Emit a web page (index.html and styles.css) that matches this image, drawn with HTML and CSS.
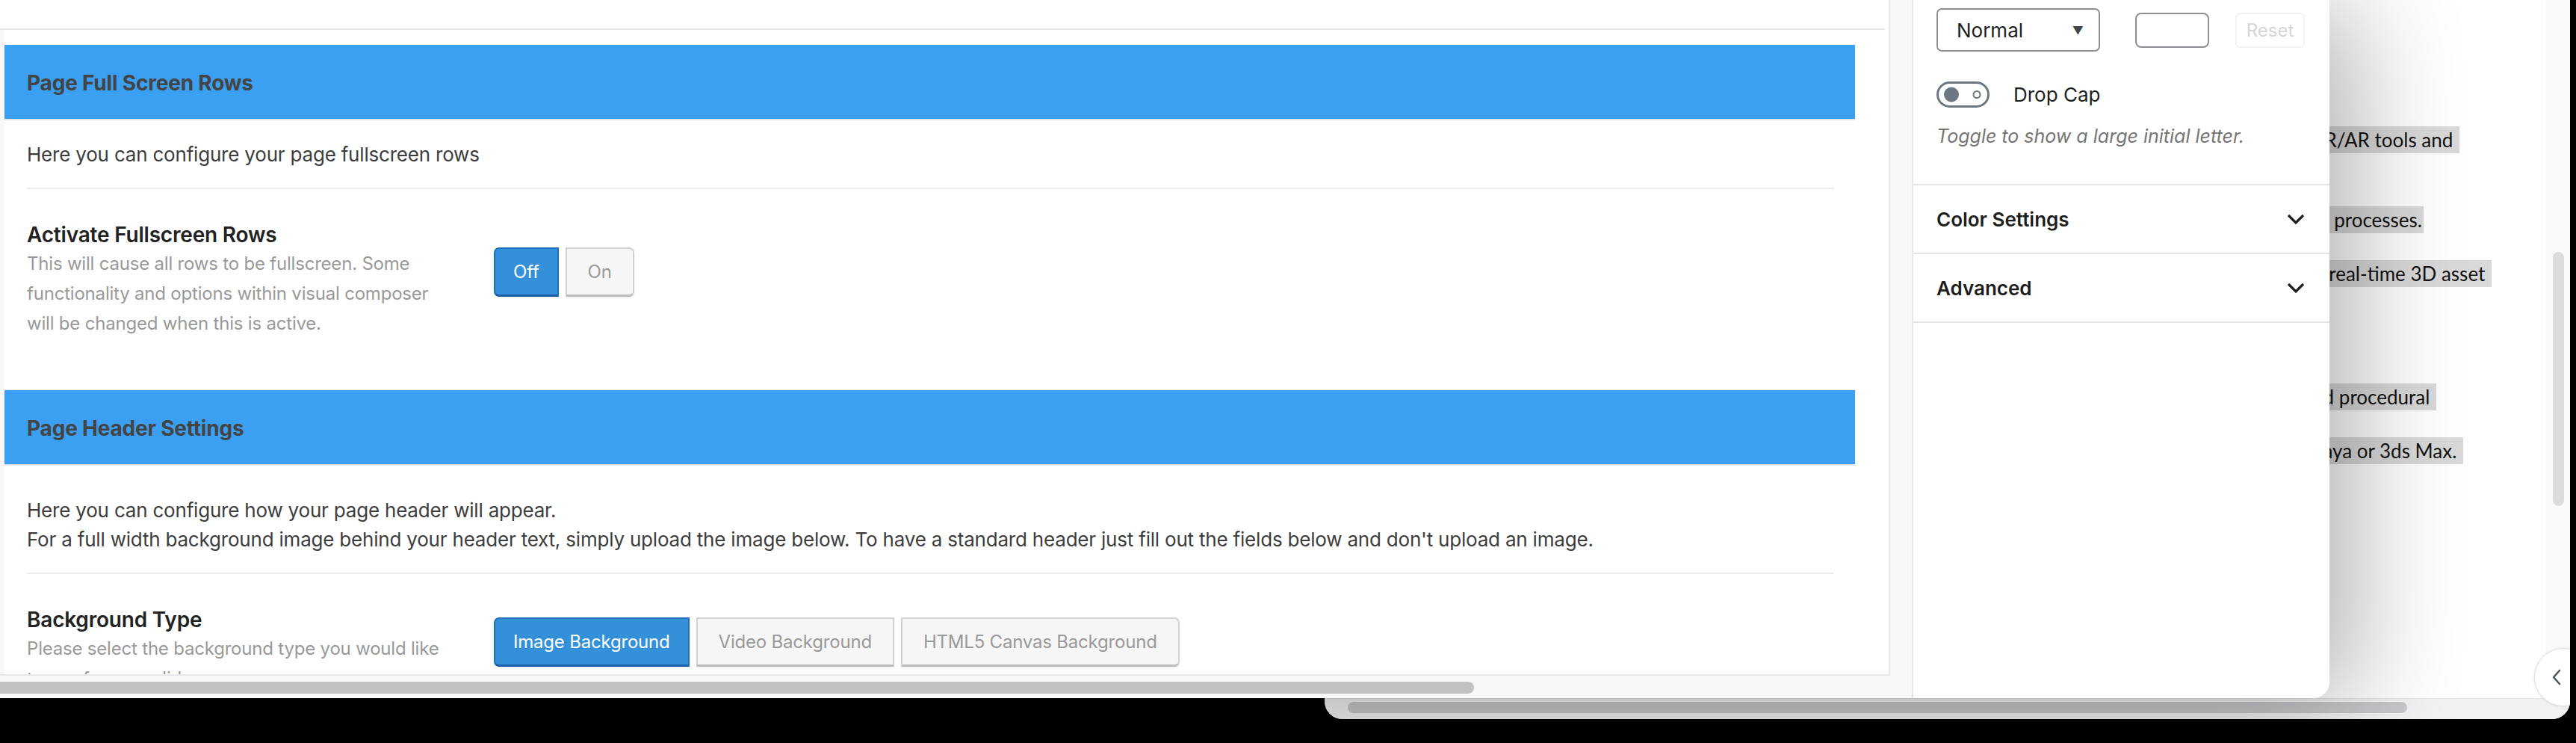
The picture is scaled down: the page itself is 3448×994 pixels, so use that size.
FILE: index.html
```html
<!DOCTYPE html>
<html lang="en">
<head>
<meta charset="utf-8">
<title>Page Settings</title>
<link rel="stylesheet" href="styles.css">
</head>
<body>
<div class="desktop">

  <div class="win-back">
    <div class="bk-main">
      <div class="bk-content">
        <div class="bk-line l1"><span class="hl">VR/AR tools and </span></div>
        <div class="bk-line l2"><span class="hl">and processes.</span></div>
        <div class="bk-line l3"><span class="hl">and real-time 3D asset </span></div>
        <div class="bk-line l4"><span class="hl">and procedural </span></div>
        <div class="bk-line l5"><span class="hl">Maya or 3ds Max. </span></div>
      </div>
      <div class="bk-vstrip"><div class="bk-vthumb"></div></div>
    </div>
    <div class="bk-hbar"><div class="bk-hthumb"></div></div>
    <div class="collapse-btn">
      <svg width="14" height="24" viewBox="0 0 14 24"><polyline points="11,3 3,12 11,21" fill="none" stroke="#50575e" stroke-width="2.6" stroke-linecap="round" stroke-linejoin="round"/></svg>
    </div>
  </div>

  <div class="win-front">
    <div class="left-col">
      <div class="metabox">
        <div class="mb-top"></div>
        <div class="mb-inner">
          <section class="sec">
            <h2 class="sec-head">Page Full Screen Rows</h2>
            <div class="sec-body">
              <p class="intro">Here you can configure your page fullscreen rows</p>
              <div class="opt">
                <div class="opt-label">
                  <h3 class="opt-title">Activate Fullscreen Rows</h3>
                  <p class="opt-desc">This will cause all rows to be fullscreen. Some functionality and options within visual composer will be changed when this is active.</p>
                </div>
                <div class="btn-group">
                  <span class="btn btn-active">Off</span>
                  <span class="btn">On</span>
                </div>
              </div>
            </div>
          </section>
          <section class="sec sec-second">
            <h2 class="sec-head">Page Header Settings</h2>
            <div class="sec-body">
              <p class="intro intro-tall">Here you can configure how your page header will appear.<br>For a full width background image behind your header text, simply upload the image below. To have a standard header just fill out the fields below and don't upload an image.</p>
              <div class="opt">
                <div class="opt-label">
                  <h3 class="opt-title">Background Type</h3>
                  <p class="opt-desc">Please select the background type you would like to use for your slide.</p>
                </div>
                <div class="btn-group">
                  <span class="btn btn-active">Image Background</span>
                  <span class="btn">Video Background</span>
                  <span class="btn">HTML5 Canvas Background</span>
                </div>
              </div>
            </div>
          </section>
        </div>
      </div>
      <div class="hscroll"><div class="hthumb"></div></div>
    </div>

    <aside class="sidebar">
      <div class="sb-block">
        <div class="size-row">
          <div class="select"><span>Normal</span><span class="caret">▼</span></div>
          <div class="num-input"></div>
          <div class="reset-btn">Reset</div>
        </div>
        <div class="toggle-row">
          <svg class="toggle" width="71" height="35" viewBox="0 0 71 35"><rect x="1.5" y="1.5" width="68" height="32" rx="16" fill="#fff" stroke="#6c7781" stroke-width="3"/><circle cx="20" cy="17.5" r="10" fill="#6c7781"/><circle cx="54" cy="17.5" r="4.5" fill="none" stroke="#6c7781" stroke-width="2"/></svg>
          <span class="toggle-label">Drop Cap</span>
        </div>
        <p class="help">Toggle to show a large initial letter.</p>
      </div>
      <div class="panel-row"><span>Color Settings</span><svg class="chev" width="24" height="14" viewBox="0 0 24 14"><polyline points="2,2 12,12 22,2" fill="none" stroke="#1e1e1e" stroke-width="3.2"/></svg></div>
      <div class="panel-row"><span>Advanced</span><svg class="chev" width="24" height="14" viewBox="0 0 24 14"><polyline points="2,2 12,12 22,2" fill="none" stroke="#1e1e1e" stroke-width="3.2"/></svg></div>
    </aside>
  </div>

</div>
</body>
</html>
```

FILE: styles.css
```css
* { box-sizing: border-box; }
html, body { margin: 0; padding: 0; }
body { background: #000; font-family: Inter, "Noto Sans", sans-serif; }

.desktop {
  position: relative;
  width: 3448px;
  height: 994px;
  background: #000;
  overflow: hidden;
}

/* ---------- window behind ---------- */
.win-back {
  position: absolute;
  left: 1773px;
  top: 0;
  width: 1667px;
  height: 962px;
  background: #fff;
  border-radius: 0 0 24px 24px;
  overflow: hidden;
  display: flex;
  flex-direction: column;
}
.bk-main { flex: 1; display: flex; }
.bk-content {
  flex: 1;
  margin-left: 1345px;
  overflow: hidden;
  padding-top: 169px;
  display: flex;
  flex-direction: column;
  font-family: Lato, "Open Sans", sans-serif;
  font-size: 26px;
  color: #111;
}
.bk-line {
  height: 36px;
  line-height: 36px;
  display: flex;
  justify-content: flex-end;
  white-space: nowrap;
}
.hl { flex-shrink: 0; background: #d9d9d9; padding: 0 2px 0 0; white-space: pre; height: 36px; }
.l1 { width: 174px; }
.l2 { width: 126px; margin-top: 71px; }
.l3 { width: 217px; margin-top: 36px; }
.l4 { width: 143px; margin-top: 129px; }
.l5 { width: 179px; margin-top: 36px; }

.bk-vstrip { width: 33px; background: #f8f9fa; padding: 337px 0 0 10px; }
.bk-vthumb { width: 15px; height: 340px; border-radius: 8px; background: #dcdcdf; }
.bk-hbar { height: 28px; background: #f2f2f4; padding: 4px 0 0 31px; border-top: 1px solid #e2e2e4; }
.bk-hthumb { width: 1418px; height: 15px; border-radius: 8px; background: #c8c8cc; }

.collapse-btn {
  position: absolute;
  left: 1619px;
  top: 867px;
  width: 78px;
  height: 78px;
  border-radius: 50%;
  background: #fff;
  border: 1px solid #dcdcde;
  box-shadow: 0 1px 4px rgba(0,0,0,.08);
  display: flex;
  align-items: center;
  padding-left: 22px;
}

/* ---------- front window ---------- */
.win-front {
  position: absolute;
  left: 0;
  top: 0;
  width: 3118px;
  height: 934px;
  display: flex;
  background: #fff;
  border-radius: 0 0 22px 0;
  overflow: hidden;
  box-shadow: 30px 10px 150px rgba(0,0,0,.32);
}

.left-col {
  width: 2559px;
  background: #f8f8f8;
  display: flex;
  flex-direction: column;
}
.metabox {
  width: 2530px;
  height: 904px;
  background: #fff;
  border-right: 2px solid #e8e8ea;
  border-bottom: 2px solid #e8e8ea;
  overflow: hidden;
}
.mb-top { height: 40px; border-bottom: 2px solid #e5e5e8; margin-right: 5px; }
.mb-inner {
  padding: 20px 0 0 6px;
  background: linear-gradient(to right, #f8f8f8 6px, #fff 6px);
}

.sec { width: 2477px; }
.sec-second { margin-top: 20px; border-top: 1px solid #e6e6e6; }
.sec-head {
  margin: 0;
  height: 101px;
  background: #3ba0f2;
  border-bottom: 2px solid #e3e8ee;
  padding: 3px 0 0 30px;
  display: flex;
  align-items: center;
  font-size: 28px;
  font-weight: 700;
  color: #444;
  letter-spacing: -0.2px;
}
.sec-body { padding: 0 28px 0 30px; }

.intro {
  margin: 0;
  padding: 26px 0 25px;
  line-height: 39px;
  font-size: 26px;
  color: #3d3d3d;
  border-bottom: 2px solid #ececec;
  letter-spacing: -0.2px;
}
.intro-tall { padding-top: 40px; }

.opt {
  display: flex;
  align-items: center;
  padding: 42px 0 48px;
}
.opt-label { width: 570px; margin-right: 55px; }
.opt-title {
  margin: 0;
  font-size: 28px;
  line-height: 38px;
  font-weight: 600;
  color: #222;
  letter-spacing: -0.2px;
}
.opt-desc {
  margin: 0;
  font-size: 24px;
  line-height: 40px;
  color: #999;
  letter-spacing: -0.2px;
}

.btn-group { display: flex; gap: 9px; margin-bottom: 20px; }
.btn {
  height: 66px;
  padding: 0 28px;
  display: flex;
  align-items: center;
  font-size: 24px;
  color: #999;
  background: #f6f6f6;
  border: 2px solid #d2d2d2;
  border-bottom: 3px solid #bcbcbc;
  box-shadow: 0 2px 3px rgba(0,0,0,.06);
  letter-spacing: -0.2px;
}
.btn:first-child { border-radius: 7px 0 0 7px; }
.btn:last-child { border-radius: 0 7px 7px 0; }
.btn-active {
  padding: 0 24px;
  background: #3490d8;
  color: #fff;
  border-color: #1f6dbd;
  border-bottom-color: #1a5ea8;
}

.hscroll { flex: 1; padding-top: 8px; }
.hthumb { width: 1973px; height: 16px; background: #c1c1c1; border-radius: 0 8px 8px 0; }

/* ---------- sidebar ---------- */
.sidebar {
  width: 559px;
  background: #fff;
  border-left: 2px solid #e6e6e8;
  color: #1e1e1e;
}
.sb-block {
  padding: 11px 0 0 31px;
  height: 248px;
  border-bottom: 2px solid #e2e4e7;
}
.size-row { display: flex; align-items: center; }
.select {
  width: 219px;
  height: 58px;
  border: 2px solid #8c8f94;
  border-radius: 7px;
  padding: 0 20px 0 25px;
  display: flex;
  align-items: center;
  justify-content: space-between;
  font-size: 26px;
  color: #1e1e1e;
}
.caret { font-size: 15px; color: #3c434a; }
.num-input {
  margin-left: 47px;
  width: 99px;
  height: 47px;
  border: 2px solid #8c8f94;
  border-radius: 8px;
}
.reset-btn {
  margin-left: 35px;
  width: 93px;
  height: 47px;
  border: 2px solid #f1f1f1;
  border-radius: 6px;
  display: flex;
  align-items: center;
  justify-content: center;
  font-size: 24px;
  color: #d6d6d6;
}
.toggle-row { display: flex; align-items: center; margin-top: 40px; }
.toggle { display: block; }
.toggle-label { margin-left: 32px; font-size: 26px; color: #1e1e1e; }
.help {
  margin: 20px 0 0;
  font-size: 25px;
  line-height: 36px;
  font-style: italic;
  color: #757575;
}
.panel-row {
  height: 92px;
  border-bottom: 2px solid #e2e4e7;
  padding: 0 33px 0 31px;
  display: flex;
  align-items: center;
  justify-content: space-between;
  font-size: 26px;
  font-weight: 600;
  color: #1e1e1e;
}
.chev { display: block; }
```
